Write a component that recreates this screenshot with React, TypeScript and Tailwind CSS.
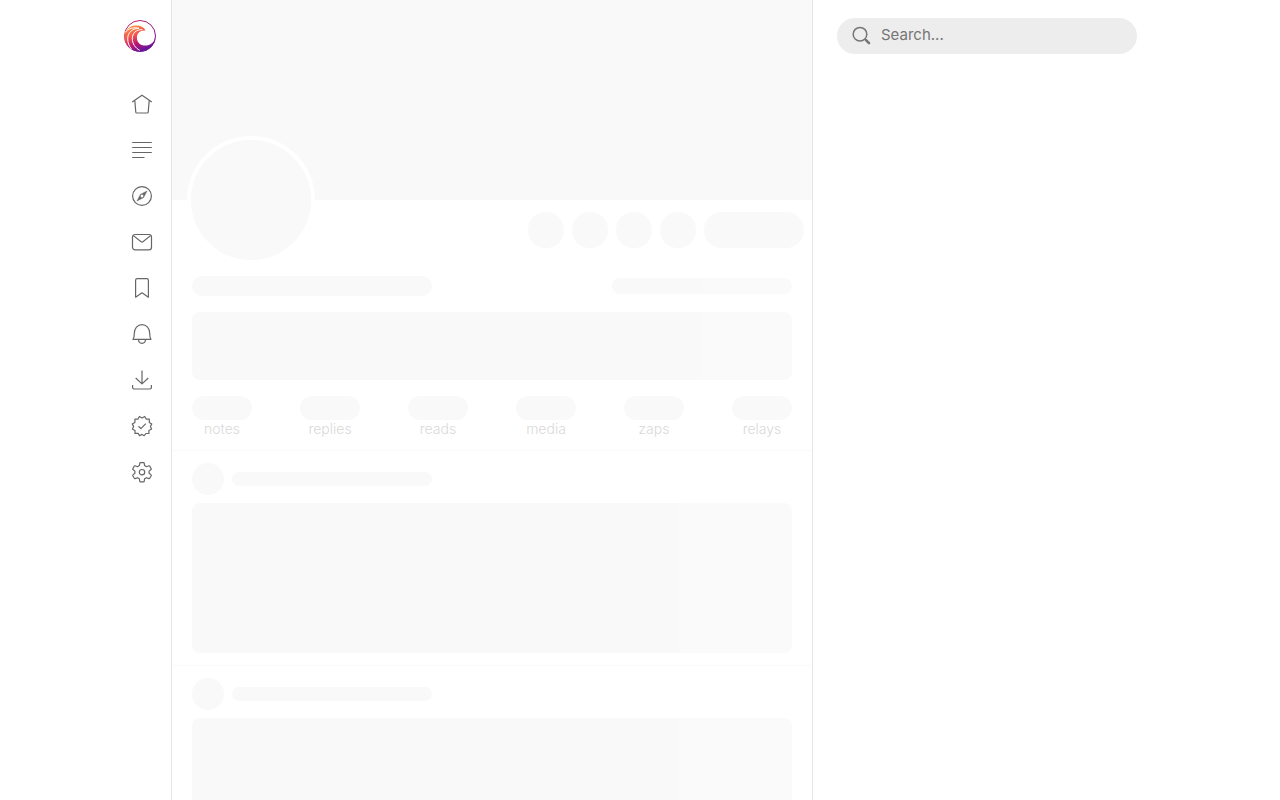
import type { ReactNode } from "react";

const navItems: { label: string; icon: ReactNode }[] = [
  {
    label: "Home",
    icon: <path d="M1.2 9 11 2.2 20.8 9M3.8 7.5l1 11.7q.1.8.9.8h10.600q.8 0 .9-.8l1-11.700" />,
  },
  {
    label: "Reads",
    icon: <path d="M1.2 3.5h19.600M1.2 8.5h19.600M1.2 13.5h19.600M1.2 18.5h12.300" />,
  },
  {
    label: "Explore",
    icon: (
      <>
        <circle cx="11" cy="11" r="9.4" />
        <path
          d="M16 6 12.6 12.6 6 16 9.4 9.400ZM11 9.300a1.700 1.700 0 1 0 0 3.400 1.700 1.700 0 0 0 0-3.400Z"
          fill="currentColor"
          fillRule="evenodd"
          strokeWidth="0.5"
        />
      </>
    ),
  },
  {
    label: "Messages",
    icon: (
      <>
        <rect x="1.5" y="3.5" width="19" height="15.3" rx="2.6" />
        <path d="m2.4 4.6 7.7 6.2q.9.7 1.8 0l7.7-6.2" />
      </>
    ),
  },
  {
    label: "Bookmarks",
    icon: <path d="M4.6 20.2V3.2q0-1.6 1.6-1.6h9.6q1.6 0 1.6 1.6v17L11 15.8Z" />,
  },
  {
    label: "Notifications",
    icon: (
      <>
        <path d="M2 16.4c1.2-1.5 1.3-3 1.3-6C3.3 5.2 6.5 1.6 11 1.6s7.7 3.6 7.7 8.800c0 3 .1 4.500 1.300 6Z" />
        <path d="M7.5 16.6c.1 2.400 1.600 3.800 3.500 3.800s3.400-1.400 3.500-3.800" />
      </>
    ),
  },
  {
    label: "Downloads",
    icon: <path d="M11 1.4v13.4M4.7 9l6.3 5.9L17.3 9M1.6 16v2.6q0 1.4 1.4 1.4h16q1.4 0 1.4-1.4V16" />,
  },
  {
    label: "Premium",
    icon: (
      <>
        <path d="m11 3 2.7-1.5 1.6 2.7h3v3.2l2.5 1.5-1.4 2.6 1.2 2.5-2.7 1.5v3h-3l-1.7 2.2-2.2-1.3-2.4 1.3-1.5-2.3H4v-3l-2.6-1.5L2.6 11.4 1.2 8.9l2.7-1.5V4.2h3l1.5-2.7Z" />
        <path d="m7.5 11.3 2.4 2.3 4.9-5" />
      </>
    ),
  },
  {
    label: "Settings",
    icon: (
      <>
        <path d="M9.4 1.6h3.2q.5 0 .6.5l.4 2.5 1.9 1.1 2.4-.9q.5-.2.8.3l1.5 2.6q.3.5-.1.8l-2 1.6v2.2l2 1.6q.4.3.1.8l-1.5 2.6q-.3.5-.8.3l-2.4-.9-1.9 1.1-.4 2.5q-.1.5-.6.5H9.4q-.5 0-.6-.5l-.4-2.5-1.9-1.1-2.4.9q-.5.2-.8-.3l-1.5-2.6q-.3-.5.1-.8l2-1.6v-2.2l-2-1.6q-.4-.3-.1-.8l1.5-2.6q.3-.5.8-.3l2.4.9 1.9-1.1.4-2.5q.1-.5.6-.5Z" />
        <circle cx="11" cy="11.2" r="2.7" />
      </>
    ),
  },
];

const stats = ["notes", "replies", "reads", "media", "zaps", "relays"];

function Logo() {
  return (
    <svg viewBox="0 0 32 32" className="size-8" aria-hidden="true">
      <defs>
        <linearGradient id="wave" x1="0.15" y1="0" x2="0.7" y2="1">
          <stop offset="0" stopColor="#fa9a3b" />
          <stop offset="0.35" stopColor="#f3564f" />
          <stop offset="0.62" stopColor="#bc1870" />
          <stop offset="0.9" stopColor="#6a159a" />
        </linearGradient>
        <linearGradient id="ring" x1="0" y1="0" x2="1" y2="1">
          <stop offset="0" stopColor="#c8285c" />
          <stop offset="0.5" stopColor="#9a127c" />
          <stop offset="1" stopColor="#6a159a" />
        </linearGradient>
      </defs>
      <circle cx="16" cy="16" r="15.5" fill="none" stroke="url(#ring)" strokeWidth="1" />
      <path
        d="M.2 17C.5 10.500 5.500 5.600 12 5.600c4.500 0 8 1.700 9.600 4.900-5.200-.6-8.700 2.600-8.700 7.200 0 4.700 3.600 7.900 8.200 7.900 5.400 0 9.300-3.600 10.500-8.600C31.200 25.200 24.600 31.800 16 31.800S.2 25 .2 17Z"
        fill="url(#wave)"
      />
      <path d="M1 12.5C4.300 8.200 9.500 7 15 8.300 8 8.500 3.800 12.800 3.700 18.500c-.1 4 1.300 7.500 3.700 10.500" fill="none" stroke="#fff" strokeWidth="1" />
      <path d="M18.500 9.700C12 9.200 8.200 13.400 8.300 18.800c.1 5 3 9.200 7.400 11.500" fill="none" stroke="#fff" strokeWidth="1" />
    </svg>
  );
}

function PostSkeleton() {
  return (
    <div className="border-b border-[#fafafa] px-5 py-3">
      <div className="flex items-center gap-2">
        <div className="size-8 rounded-full bg-[#f9f9f9]" />
        <div className="h-3.5 w-50 rounded-full bg-[#f9f9f9]" />
      </div>
      <div className="mt-2 h-[150px] rounded-lg bg-[linear-gradient(90deg,#f9f9f9_81%,#fafafa_81%)]" />
    </div>
  );
}

function ProfileSkeleton() {
  return (
    <section className="border-b border-[#fafafa]">
      <div className="h-50 bg-[#f9f9f9]" />
      <div className="flex items-start justify-between pr-2 pl-[15px]">
        <div className="-mt-16 size-32 rounded-full border-4 border-white bg-[#f9f9f9]" />
        <div className="flex gap-2 pt-3">
          {[0, 1, 2, 3].map((n) => (
            <div key={n} className="size-9 rounded-full bg-[#f9f9f9]" />
          ))}
          <div className="h-9 w-25 rounded-full bg-[#f9f9f9]" />
        </div>
      </div>
      <div className="px-5 py-3">
        <div className="flex items-center justify-between">
          <div className="h-5 w-60 rounded-full bg-[#f9f9f9]" />
          <div className="h-4 w-45 rounded-full bg-[linear-gradient(90deg,#f9f9f9_50%,#fafafa_50%)]" />
        </div>
        <div className="mt-4 h-17 rounded-lg bg-[linear-gradient(90deg,#f9f9f9_85%,#fafafa_85%)]" />
        <div className="mt-4 flex justify-between">
          {stats.map((stat) => (
            <div key={stat} className="flex w-15 flex-col items-center">
              <div className="h-6 w-full rounded-full bg-[#f9f9f9]" />
              <span className="text-sm leading-[18px] font-light text-[#d9d9d9]">{stat}</span>
            </div>
          ))}
        </div>
      </div>
    </section>
  );
}

export default function App() {
  return (
    <div className="h-screen overflow-hidden bg-white font-['Inter',sans-serif]">
      <div className="mx-auto flex h-full max-w-[1032px]">
        <aside className="w-[47px] shrink-0 pt-5">
          <a href="#home" aria-label="Primal" className="block w-8">
            <Logo />
          </a>
          <nav className="mt-[41px] flex w-9 flex-col gap-6">
            {navItems.map((item) => (
              <a key={item.label} href="#" aria-label={item.label} className="flex justify-center text-[#666]">
                <svg
                  viewBox="0 0 22 22"
                  className="size-[22px]"
                  fill="none"
                  stroke="currentColor"
                  strokeWidth="1.2"
                  strokeLinejoin="round"
                >
                  {item.icon}
                </svg>
              </a>
            ))}
          </nav>
        </aside>

        <main className="h-full w-[642px] min-w-0 overflow-hidden border-x border-[#e5e5e5]">
          <ProfileSkeleton />
          <PostSkeleton />
          <PostSkeleton />
          <PostSkeleton />
        </main>

        <aside className="min-w-0 flex-1 pt-[18px] pr-[19px] pl-6">
          <label className="flex h-9 items-center gap-[9px] rounded-full bg-[#ededed] px-[15px] text-[#757575]">
            <svg viewBox="0 0 20 20" className="size-5 shrink-0" fill="none" stroke="currentColor" aria-hidden="true">
              <circle cx="8" cy="8.2" r="6.8" strokeWidth="1.5" />
              <path d="m12.8 13 1.5 1.5" strokeWidth="1.5" />
              <path d="m14 14.2 3 3" strokeWidth="2.6" strokeLinecap="round" />
            </svg>
            <input
              type="text"
              aria-label="Search"
              placeholder="Search..."
              className="w-full min-w-0 bg-transparent pb-0.5 text-[15px] outline-none placeholder:text-[#757575]"
            />
          </label>
        </aside>
      </div>
    </div>
  );
}
